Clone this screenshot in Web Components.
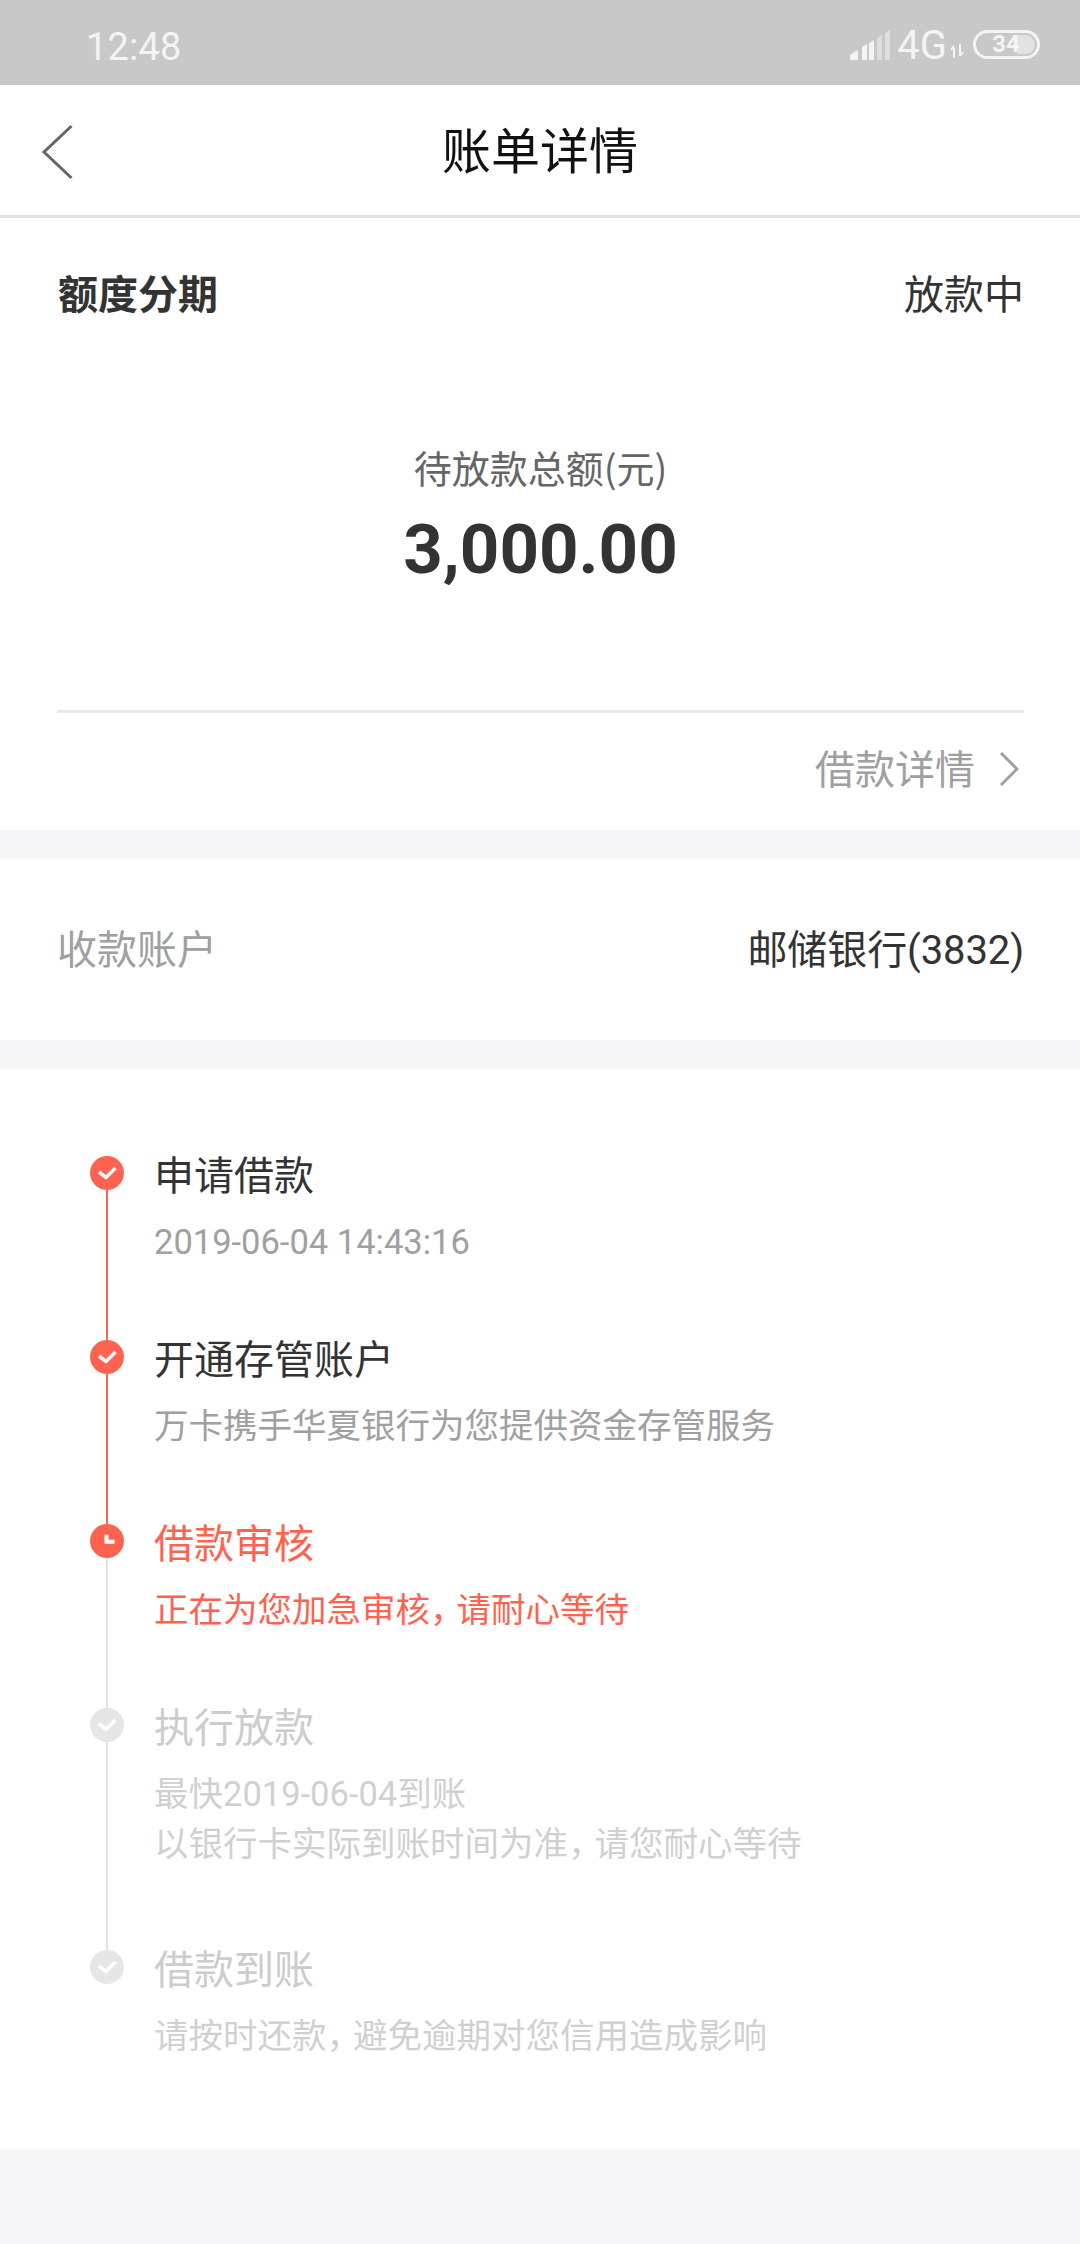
<!DOCTYPE html>
<html lang="zh">
<head>
<meta charset="utf-8">
<title>账单详情</title>
<style>
html,body{margin:0;padding:0;background:#f6f6f8;}
body{width:1080px;height:2244px;overflow:hidden;font-family:"Noto Sans CJK SC",Roboto,sans-serif;color:#333;}
.c{letter-spacing:-8px;}
</style>
</head>
<body>
<status-bar></status-bar>
<nav-bar>账单详情</nav-bar>
<bill-summary></bill-summary>
<info-row label="收款账户" value="邮储银行(3832)"></info-row>
<time-line>
  <time-step state="done" heading="申请借款">2019-06-04 14:43:16</time-step>
  <time-step state="done" heading="开通存管账户">万卡携手华夏银行为您提供资金存管服务</time-step>
  <time-step state="active" heading="借款审核">正在为您加急审核<span class="c">，</span>请耐心等待</time-step>
  <time-step state="todo" heading="执行放款" tall>最快2019-06-04到账<br>以银行卡实际到账时间为准<span class="c">，</span>请您耐心等待</time-step>
  <time-step state="todo" heading="借款到账" last>请按时还款<span class="c">，</span>避免逾期对您信用造成影响</time-step>
</time-line>
<script>
const FONT='"Roboto","Noto Sans CJK SC",sans-serif';
const define=(name,html)=>customElements.define(name,class extends HTMLElement{
  constructor(){super();this.attachShadow({mode:'open'}).innerHTML=typeof html==='function'?html(this):html;}
});

define('status-bar',`<style>
:host{display:flex;align-items:center;justify-content:space-between;height:85px;box-sizing:border-box;background:#c8c8c8;padding:0 40px 0 86px;color:#f4f4f4;font-family:${FONT};}
.time{font-size:38px;line-height:85px;letter-spacing:.2px;margin-top:9px;}
.right{display:flex;align-items:center;margin-top:4px;}
svg{display:block;}
.g{font-size:40px;line-height:40px;margin:3px 3px 0 7px;}
.bat{position:relative;box-sizing:border-box;width:67px;height:29px;border:3px solid #f4f4f4;border-radius:15px;margin-left:9px;display:flex;align-items:center;justify-content:center;overflow:hidden;}
.bat b{font-size:24px;font-weight:700;line-height:23px;margin-right:1px;position:relative;}
.bat u{position:absolute;right:2px;top:2px;bottom:2px;width:18px;background:#e2e2e2;border-radius:0 10px 10px 0;}
</style>
<span class="time">12:48</span>
<span class="right">
<svg width="40" height="30" viewBox="0 0 40 30"><path fill="#f4f4f4" d="M0 30v-5l8-5v10zM12 30V17l5-3v16zM19 30V13l5-3v20z"/><path fill="#dedede" d="M27 30V8l5-3v25zM35 30V3l5-3v30z"/></svg>
<span class="g">4G</span>
<svg width="14" height="14" viewBox="0 0 14 14" style="margin-top:13px"><path fill="none" stroke="#f4f4f4" stroke-width="2" d="M4 14V4M1 6l3-4M10 0v12M13 8l-3 4"/></svg>
<span class="bat"><u></u><b>34</b></span>
</span>`);

define('nav-bar',`<style>
:host{display:flex;align-items:center;justify-content:center;position:relative;height:133px;box-sizing:border-box;background:#fff;border-bottom:3px solid #e2e2e2;font-size:49px;color:#111;padding-bottom:6px;}
svg{position:absolute;left:41px;top:39px;}
</style>
<svg width="33" height="56" viewBox="0 0 33 56"><path d="M30.500 2 3 28l27.500 26" fill="none" stroke="#666" stroke-width="3"/></svg>
<slot></slot>`);

define('bill-summary',`<style>
:host{display:block;background:#fff;height:612px;box-sizing:border-box;padding:44px 56px 0 57px;}
.head{display:flex;justify-content:space-between;font-size:40px;line-height:60px;}
.head b{font-weight:700;margin-left:1px;}
.label{text-align:center;font-size:38px;line-height:50px;color:#666;margin-top:120px;}
.amt{text-align:center;font-family:${FONT};font-size:69px;font-weight:700;line-height:90px;margin-top:13px;}
.rule{height:3px;background:#e8e8e8;margin-top:115px;}
.more{display:flex;justify-content:flex-end;align-items:center;height:84px;margin-top:12px;font-size:40px;color:#a0a0a0;}
svg{margin:3px 5px 0 24px;}
</style>
<div class="head"><b>额度分期</b><span>放款中</span></div>
<div class="label">待放款总额(元)</div>
<div class="amt">3,000.00</div>
<div class="rule"></div>
<div class="more"><span>借款详情</span><svg width="20" height="34" viewBox="0 0 20 34"><path d="M2 1l16 16L2 33" fill="none" stroke="#a0a0a0" stroke-width="3"/></svg></div>`);

define('info-row',el=>`<style>
:host{display:flex;justify-content:space-between;align-items:center;background:#fff;height:181px;box-sizing:border-box;padding:0 56px 6px 57px;margin-top:29px;font-size:40px;}
.l{color:#a0a0a0;}
.v{color:#333;font-family:${FONT};letter-spacing:-.1px;}
</style>
<span class="l">${el.getAttribute('label')}</span><span class="v">${el.getAttribute('value')}</span>`);

define('time-line',`<style>
:host{display:block;background:#fff;margin-top:29px;height:1080px;box-sizing:border-box;padding:87px 0 0 90px;}
</style><slot></slot>`);

define('time-step',el=>{
const s=el.getAttribute('state');
const main={done:'#ff6350',active:'#ff6350',todo:'#e6e6e6'}[s];
const line=s==='done'?'#ff6350':'#e2e2e2';
const glyph=s==='active'
 ?'<path d="M16.500 10.700v7h8" fill="none" stroke="#fff" stroke-width="4"/>'
 :'<path d="M9 16l7 5.500L25.500 12" fill="none" stroke="#fff" stroke-width="3.500"/>';
const titleC={done:'#333',active:'#ff6350',todo:'#ccc'}[s];
const subC={done:'#a0a0a0',active:'#ff6350',todo:'#d0d0d0'}[s];
return `<style>
:host{display:flex;gap:30px;}
.mark{display:flex;flex-direction:column;align-items:center;width:34px;flex:none;}
svg{display:block;flex:none;}
.bar{flex:1;width:2px;background:${line};}
.text{margin-top:-8px;padding-bottom:73px;}
:host([tall]) .text{padding-bottom:81px;}
.t{font-size:40px;line-height:50px;color:${titleC};}
.s{font-size:34.500px;line-height:50px;color:${subC};margin-top:19px;font-family:${FONT};}
</style>
<div class="mark"><svg width="34" height="34" viewBox="0 0 34 34"><circle cx="17" cy="17" r="17" fill="${main}"/>${glyph}</svg>${el.hasAttribute('last')?'':'<div class="bar"></div>'}</div>
<div class="text"><div class="t">${el.getAttribute('heading')}</div><div class="s"><slot></slot></div></div>`;
});
</script>
</body>
</html>
